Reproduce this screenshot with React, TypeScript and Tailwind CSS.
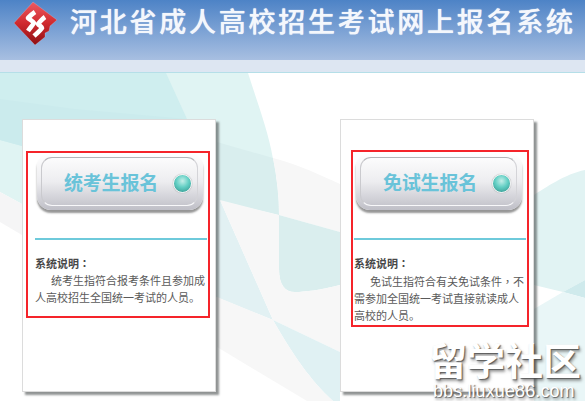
import type { ReactNode } from "react";

const cjk = "font-['Liberation_Sans','Noto_Sans_CJK_SC',sans-serif]";
// centred colon and comma, as in the reference
const tc = "font-['Noto_Sans_CJK_TC',sans-serif]";

function Logo() {
  return (
    <svg width="46" height="46" viewBox="0 0 46 46" className="shrink-0">
      <defs>
        <linearGradient id="logoRed" x1="0" y1="0" x2="0" y2="1">
          <stop offset="0" stopColor="#ee5a62" />
          <stop offset="0.5" stopColor="#cf2a2e" />
          <stop offset="1" stopColor="#8f0f14" />
        </linearGradient>
      </defs>
      <path
        d="M20 1 L44 19 L37 25 L36 30 L32 32 L32 36 L22 44 L1 22 Z"
        fill="url(#logoRed)"
        stroke="#ffffff"
        strokeOpacity="0.3"
        strokeWidth="0.6"
      />
      <path
        d="M22 11 C19 13 17 15 15 17 C17 19 20 20 21 22 C19 25 17 27 15 30"
        fill="none"
        stroke="#fff"
        strokeWidth="4.6"
        strokeLinejoin="round"
      />
      <path
        d="M32 16 C29 18 27 21 25 23 C27 25 29 26 29 27 C27 30 24 32 21 35"
        fill="none"
        stroke="#fff"
        strokeWidth="4.6"
        strokeLinejoin="round"
      />
    </svg>
  );
}

// viewBox follows page coordinates so the curves are easy to read off the picture
function Background() {
  return (
    <svg className="absolute inset-0 h-full w-full" viewBox="0 73 585 328" preserveAspectRatio="none">
      <rect x="0" y="73" width="585" height="328" fill="#ffffff" />
      {/* left wave */}
      <path d="M0 73 H248 C258 105 268 130 273 159 C277 180 279 200 279 215 L217 200 L22 204 L0 192 Z" fill="#e0f4f3" />
      <path d="M0 73 H166 L187 119 L216 142 L22 146 L0 140 Z" fill="#cfeeef" />
      <path d="M0 99 L75 109 L187 119 L216 142 L22 146 L0 140 Z" fill="#cbebed" />
      <path d="M217 142 L273 158 C277 178 279 197 279 215 L217 200 Z" fill="#d9eeee" />
      <path d="M0 192 L22 204 V235 L0 222 Z" fill="#f5f5f6" />
      <path d="M216 200 L220 200 L273 320 L216 297 Z" fill="#e2f1f3" />
      {/* middle band */}
      <path d="M273 158 C300 165 320 175 340 184 V232 L279 215 C279 197 277 178 273 158 Z" fill="#f7f7f7" />
      <path d="M279 215 L340 232 V285 C320 290 305 292 295 292 C285 292 279 285 279 269 Z" fill="#daeeee" />
      <path d="M220 200 L279 215 V269 C279 285 285 292 295 292 C305 292 320 290 340 285 V352 L273 320 Z" fill="#f7f7f7" />
      <path d="M273 320 L340 352 V401 H333 C310 380 293 355 273 320 Z" fill="#e0f1f3" />
      <path d="M217 297 L273 320 C293 355 310 380 333 401 H307 L217 347 Z" fill="#f7f7f7" />
      {/* right wave */}
      <path d="M534 195 C545 188 565 174 585 170 V280 L563 292 L534 285 Z" fill="#e1f3f3" />
      <path d="M563 292 L585 280 V298 Z" fill="#cfeaec" />
      <path d="M534 309 L563 292 L585 298 V401 H534 Z" fill="#e9f6f7" />
    </svg>
  );
}

function EntryButton({ label }: { label: string }) {
  return (
    <div className="h-[57px] rounded-[14px] bg-gradient-to-b from-[#ffffff] via-[#ededf0] to-[#bfbfc7] pt-[4px] pr-[5px] pl-[4px] shadow-[0_3px_2px_rgba(80,80,80,0.6)]">
      <div className="flex h-[49px] items-center rounded-[11px] border border-t-[#b4b4b8] border-r-[#d4d4d8] border-b-[#f8f8fa] border-l-[#cacace] pt-[3px] pr-[5px] pl-[22px]">
        <span className="text-[19px] leading-none font-bold tracking-[-0.2px] text-[#69c3d9]">{label}</span>
        <span className="ml-auto h-[19px] w-[19px] rounded-full border border-[#f1f4f4] bg-[radial-gradient(circle_at_50%_35%,#c5efe9_0%,#62cfc4_45%,#2f8f88_100%)] shadow-[0_0_1px_#777]" />
      </div>
    </div>
  );
}

function Card({
  label,
  lines,
  boxClass,
  buttonClass,
  bodyClass,
}: {
  label: string;
  lines: ReactNode[];
  boxClass: string;
  buttonClass: string;
  bodyClass: string;
}) {
  return (
    <div className="h-[273px] w-[194px] shrink-0 border border-[#dcdcdc] bg-white shadow-[3px_3px_2px_rgba(70,75,75,0.6)]">
      <div className={`${boxClass} border-2 border-[#f5242a]`}>
        <div className={buttonClass}>
          <EntryButton label={label} />
        </div>
        <div className={bodyClass}>
          <div className="h-[2px] bg-[#6ecadb]" />
          <div className="mt-[15px] text-[11px] leading-[17px] text-[#5a5a5a]">
            <div className="font-bold text-[#484848]">
              系统说明<span className={tc}>：</span>
            </div>
            {lines.map((line, i) => (
              <div key={i} className={i === 0 ? "pl-[16px] whitespace-nowrap" : "whitespace-nowrap"}>
                {line}
              </div>
            ))}
          </div>
        </div>
      </div>
    </div>
  );
}

export default function App() {
  return (
    <div className={`relative h-[401px] w-[585px] overflow-hidden ${cjk}`}>
      {/* Header */}
      <header className="flex h-[60px] items-start bg-gradient-to-b from-[#4d83c6] to-[#a8bfe1] pt-[1px] pl-[13px]">
        <Logo />
        <h1 className="mt-[7px] ml-[11px] text-[27px] leading-[30px] font-medium tracking-[2.75px] whitespace-nowrap text-[#f4f7fc] [text-shadow:0_0_1px_#ffffff]">
          河北省成人高校招生考试网上报名系统
        </h1>
      </header>
      <div className="h-[13px] border-b border-[#b5dfe8] bg-[#dde6f2]" />

      {/* Cards on the wave background */}
      <main className="relative h-[328px]">
        <Background />
        <div className="relative flex gap-[124px] pt-[46px] pl-[22px]">
          <Card
            label="统考生报名"
            lines={["统考生指符合报考条件且参加成", "人高校招生全国统一考试的人员。"]}
            boxClass="mt-[31px] ml-[3px] h-[167px] w-[184px]"
            buttonClass="ml-[9px] w-[166px]"
            bodyClass="mt-[28px] ml-[7px] w-[172px]"
          />
          <Card
            label="免试生报名"
            lines={[
              <>
                免试生指符合有关免试条件<span className={tc}>，</span>不
              </>,
              "需参加全国统一考试直接就读成人",
              "高校的人员。",
            ]}
            boxClass="mt-[30px] ml-[10px] h-[177px] w-[178px]"
            buttonClass="mt-[1px] ml-[3px] w-[166px]"
            bodyClass="mt-[28px] ml-[1px] w-[172px]"
          />
        </div>
      </main>

      {/* Watermark */}
      <div className="absolute top-[343px] left-[429px] w-[156px] text-white [text-shadow:1px_1px_1px_rgba(70,70,70,0.8),2px_3px_3px_rgba(70,70,70,0.5)]">
        <div className="text-[38px] leading-[38px] font-bold whitespace-nowrap">留学社区</div>
        <div className="mt-[1px] ml-[4px] font-['Liberation_Sans',sans-serif] text-[18px] leading-[18px] tracking-[0.1px] whitespace-nowrap">
          bbs.liuxue86.com
        </div>
      </div>
    </div>
  );
}
